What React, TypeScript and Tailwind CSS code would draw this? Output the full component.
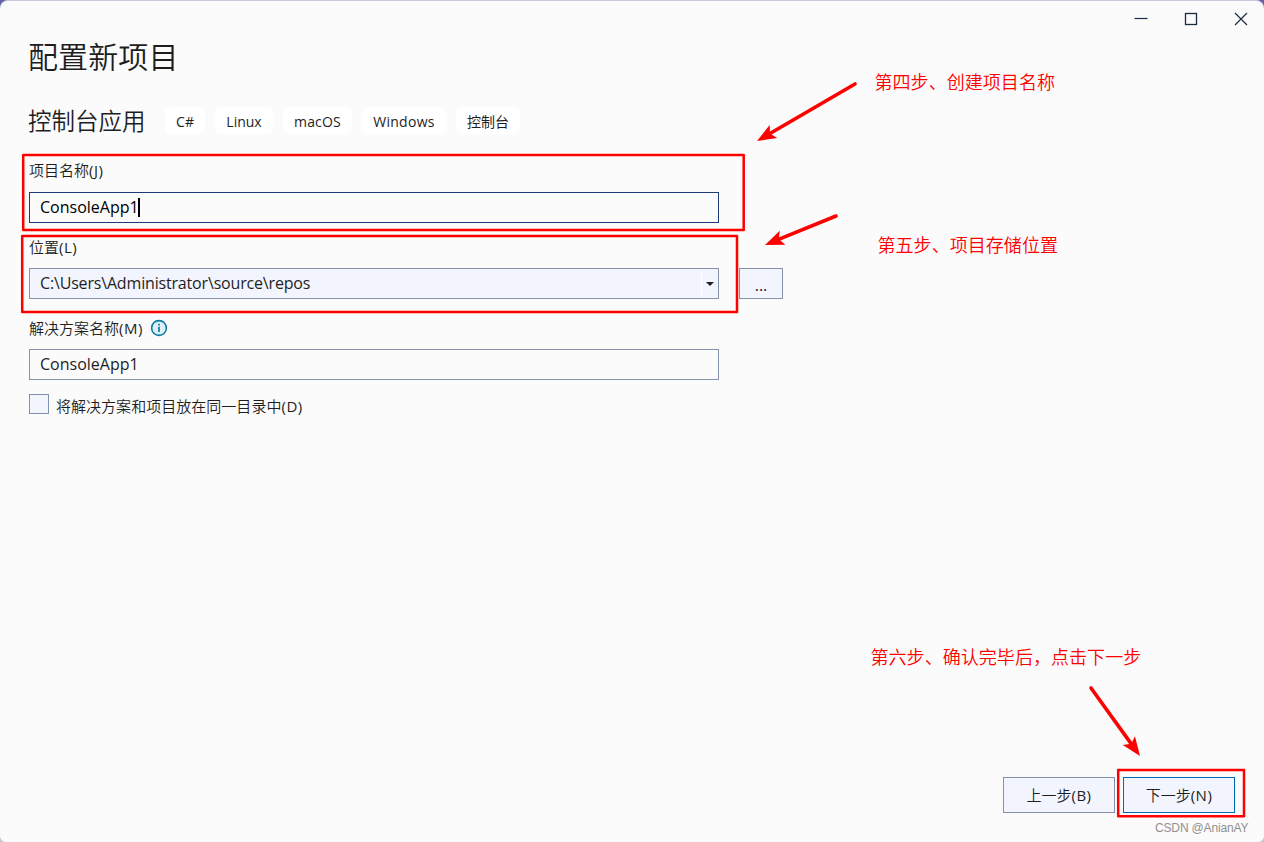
type ArrowProps = {
  from: [number, number];
  to: [number, number];
};

const tags = [
  { label: "C#", className: "w-10" },
  { label: "Linux", className: "w-[58px]" },
  { label: "macOS", className: "w-[69px] tracking-[0.2px]" },
  { label: "Windows", className: "w-[84px] tracking-[0.3px]" },
  { label: "控制台", className: "w-16" },
];

function WindowControls() {
  return (
    <div className="flex h-[35px] shrink-0 justify-end text-[#1b2b45]">
      <button aria-label="最小化" className="flex w-[50px] items-center justify-center">
        <svg width="14" height="14" viewBox="0 0 14 14" fill="none" stroke="currentColor">
          <path d="M.5 6.5h13" strokeWidth="1.2" />
        </svg>
      </button>
      <button aria-label="最大化" className="flex w-[50px] items-center justify-center">
        <svg width="14" height="14" viewBox="0 0 14 14" fill="none" stroke="currentColor">
          <rect x="1.5" y="1.5" width="11" height="11" strokeWidth="1.3" />
        </svg>
      </button>
      <button aria-label="关闭" className="mr-[-2px] flex w-[50px] items-center justify-center">
        <svg width="14" height="14" viewBox="0 0 14 14" fill="none" stroke="currentColor">
          <path d="M1 1l12 12M13 1L1 13" strokeWidth="1.2" />
        </svg>
      </button>
    </div>
  );
}

// Access key shown after a label, e.g. (N)
function AccessKey({ letter }: { letter: string }) {
  return <span className="font-normal tracking-[0.5px]">({letter})</span>;
}

function Arrow({ from, to }: ArrowProps) {
  const dx = to[0] - from[0];
  const dy = to[1] - from[1];
  const length = Math.hypot(dx, dy);
  const angle = (Math.atan2(dy, dx) * 180) / Math.PI;
  return (
    <g transform={`translate(${to[0]} ${to[1]}) rotate(${angle})`}>
      <path d={`M${-length} 0H-14`} stroke="#fe0000" strokeWidth="3.6" strokeLinecap="round" />
      <path d="M0 0L-19 -7.5L-15 0L-19 7.5Z" fill="#fe0000" />
    </g>
  );
}

function Annotations() {
  return (
    <div className="pointer-events-none absolute inset-0 text-lg leading-6 font-[350] tracking-[0.05px] text-[#fe0000]">
      <svg className="absolute inset-0" width="1264" height="842" fill="none">
        <g stroke="#fe0000" strokeWidth="2.5" strokeLinejoin="round">
          <rect x="23.2" y="155" width="720.5" height="75" />
          <rect x="22.2" y="236" width="714.8" height="76" />
          <rect x="1118.2" y="770" width="125.8" height="46.3" />
        </g>
        <Arrow from={[855, 84]} to={[757, 141]} />
        <Arrow from={[836, 216]} to={[765, 245]} />
        <Arrow from={[1091, 688]} to={[1140, 756]} />
      </svg>
      <p className="absolute top-[70px] left-[874.5px] whitespace-nowrap">第四步、创建项目名称</p>
      <p className="absolute top-[233px] left-[877.5px] whitespace-nowrap">第五步、项目存储位置</p>
      <p className="absolute top-[645px] left-[870.5px] whitespace-nowrap">第六步、确认完毕后，点击下一步</p>
      <p className="absolute top-[819px] left-[1155px] font-['Liberation_Sans'] text-xs leading-[18px] font-normal tracking-[-0.15px] whitespace-nowrap text-[#909090]">
        CSDN @AnianAY
      </p>
    </div>
  );
}

export default function App() {
  return (
    <div className="relative h-[842px] w-[1264px] overflow-hidden bg-linear-to-b from-[#6262a0] to-[#c4c4d4] font-['Open_Sans','Noto_Sans_CJK_SC',sans-serif] text-[#1e1e1e]">
      <div className="flex h-full flex-col rounded-t-lg rounded-b-md border-t border-[#c8c8e0] bg-[#fbfbfb]">
        <WindowControls />
        <main className="flex flex-1 flex-col pl-[29px]">
          <h1 className="-ml-px h-10 text-[30px] leading-[41px] font-[350] tracking-[0.1px]">配置新项目</h1>
          <div className="mt-[31px] flex h-[27px] items-center">
            <h2 className="-ml-px w-[137px] text-[23.5px] leading-[27px] font-[350]">
              <span className="block pt-0.5">控制台应用</span>
            </h2>
            <ul className="flex gap-2.5 text-sm leading-[29px]">
              {tags.map((tag) => (
                <li key={tag.label} className={`h-[27px] rounded-md bg-white text-center ${tag.className}`}>
                  {tag.label}
                </li>
              ))}
            </ul>
          </div>

          <label className="mt-[26px] h-5 text-[15px] leading-5 font-[350]">
            项目名称
            <AccessKey letter="J" />
          </label>
          <div className="mt-3 flex h-[31px] w-[690px] items-center border border-[#1f3a78] pl-2.5 text-base text-black">
            <span className="-mt-0.5">ConsoleApp1</span>
            <span className="-ml-px h-[19px] w-0.5 bg-black" />
          </div>

          <label className="mt-3.5 h-5 text-[15px] leading-5 font-[350]">
            位置
            <AccessKey letter="L" />
          </label>
          <div className="mt-[11px] flex h-[31px] gap-5">
            <div className="flex w-[690px] items-center border border-[#8591a8] bg-[#f2f5fe] pl-2.5 text-base">
              <span className="-mt-0.5 flex-1 tracking-[-0.17px]">C:\Users\Administrator\source\repos</span>
              <span className="flex h-full w-[17px] items-center justify-center border-l border-white">
                <svg width="8" height="4" viewBox="0 0 8 4">
                  <path d="M0 0h8L4 4Z" fill="#1e1e1e" />
                </svg>
              </span>
            </div>
            <button className="w-11 border border-[#8591a8] bg-[#f2f5fe] pt-0.5 text-base leading-6">...</button>
          </div>

          <label className="mt-[19px] flex h-5 items-center text-[15px] leading-5 font-[350]">
            <span className="w-[121px] whitespace-nowrap">
              解决方案名称
              <AccessKey letter="M" />
            </span>
            <svg width="18" height="18" viewBox="0 0 18 18">
              <circle cx="9" cy="9" r="7.4" fill="#e1eef3" stroke="#077ea4" strokeWidth="1.6" />
              <path d="M9 7.8v5.2M9 4.7v1.8" stroke="#077ea4" strokeWidth="1.7" />
            </svg>
          </label>
          <div className="mt-[11px] flex h-[31px] w-[690px] items-center border border-[#8591a8] pl-2.5 text-base">
            <span className="-mt-0.5">ConsoleApp1</span>
          </div>

          <div className="mt-3.5 flex gap-[7px]">
            <span className="h-5 w-5 border border-[#8591a8] bg-[#f2f5fe]" />
            <span className="pt-0.5 text-[15px] leading-5 font-[350] tracking-[0.03px]">
              将解决方案和项目放在同一目录中
              <AccessKey letter="D" />
            </span>
          </div>

          <div className="mt-auto mr-[29px] mb-[29px] flex justify-end gap-2 text-[15px] leading-[34px] font-[350]">
            <button className="h-9 w-28 border border-[#8591a8] bg-[#f2f5fe]">
              上一步
              <AccessKey letter="B" />
            </button>
            <button className="h-9 w-28 border border-[#0069b5] bg-[#f2f5fe]">
              下一步
              <AccessKey letter="N" />
            </button>
          </div>
        </main>
      </div>
      <Annotations />
    </div>
  );
}
